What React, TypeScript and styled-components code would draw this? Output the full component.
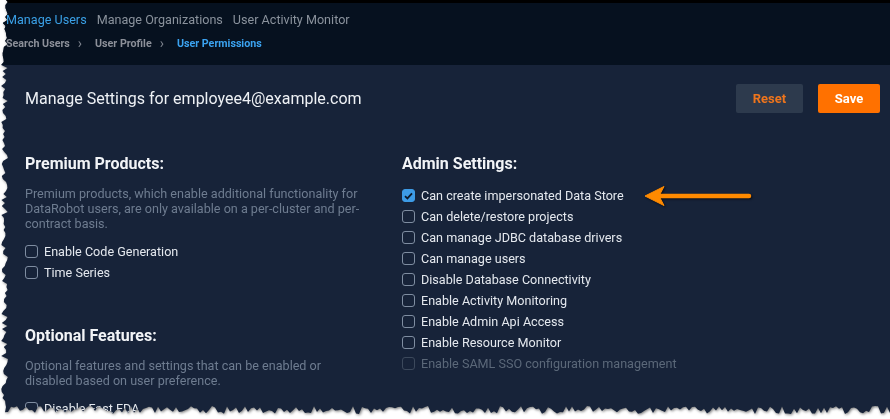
import React from "react";
import styled, { createGlobalStyle } from "styled-components";

const GlobalStyle = createGlobalStyle`
  html, body { margin: 0; padding: 0; background: #ffffff; }
  body { font-family: Roboto, "Liberation Sans", Arial, sans-serif; overflow: hidden; }
`;

function makeTornClip(): string {
  let s = 12345;
  const rnd = () => {
    s = (s * 16807) % 2147483647;
    return (s - 1) / 2147483646;
  };
  const pts: string[] = [];
  pts.push("6px 0px");
  pts.push("890px 0px");
  pts.push("890px 413px");
  for (let x = 887; x > 4; x -= 3) {
    const y = 406 + rnd() * 8;
    pts.push(`${x}px ${y.toFixed(1)}px`);
  }
  for (let y = 407; y > 0; y -= 3) {
    const x = 1 + rnd() * 7;
    pts.push(`${x.toFixed(1)}px ${y}px`);
  }
  return `polygon(${pts.join(", ")})`;
}

const TORN = makeTornClip();

const Shadow = styled.div`
  width: 890px;
  height: 419px;
  filter: drop-shadow(1px 1px 1.5px rgba(0, 0, 0, 0.55));
`;

const Frame = styled.div`
  position: relative;
  width: 890px;
  height: 419px;
  display: flex;
  flex-direction: column;
  background: #172339;
  clip-path: ${TORN};
  overflow: hidden;
`;

const TopStrip = styled.div`
  height: 3px;
  background: #000000;
  flex: none;
`;

const Header = styled.header`
  flex: none;
  background: #06111f;
  padding: 9px 6px 14px 6px;
  display: flex;
  flex-direction: column;
  gap: 9px;
`;

const Tabs = styled.nav`
  display: flex;
  gap: 10px;
  height: 16px;
  align-items: center;
`;

const Tab = styled.span<{ $active?: boolean }>`
  font-size: 12.6px;
  line-height: 16px;
  color: ${(p) => (p.$active ? "#3aa0e6" : "#8a929c")};
`;

const Crumbs = styled.div`
  display: flex;
  align-items: center;
  height: 14px;
`;

const Crumb = styled.span<{ $active?: boolean }>`
  font-size: 10.7px;
  line-height: 14px;
  font-weight: 700;
  color: ${(p) => (p.$active ? "#3ba3f0" : "#8c9099")};
`;

const Sep = styled.span`
  font-size: 14px;
  line-height: 14px;
  color: #7d838d;
  margin: -2px 13px 0 8px;
`;

const Panel = styled.main`
  flex: 1;
  padding: 19px 10px 0 25px;
  display: flex;
  flex-direction: column;
`;

const TitleRow = styled.div`
  display: flex;
  align-items: center;
  justify-content: space-between;
  height: 29px;
`;

const Title = styled.h1`
  margin: 0;
  font-size: 16px;
  font-weight: 400;
  color: #eef1f5;
`;

const Buttons = styled.div`
  display: flex;
  gap: 15px;
`;

const Button = styled.button<{ $primary?: boolean }>`
  height: 29px;
  width: ${(p) => (p.$primary ? "62px" : "67px")};
  border: none;
  border-radius: 2px;
  font-family: Roboto, "Liberation Sans", sans-serif;
  font-size: 13px;
  font-weight: 700;
  background: ${(p) => (p.$primary ? "#ff7100" : "#2d3a4d")};
  color: ${(p) => (p.$primary ? "#ffffff" : "#ef751c")};
`;

const Columns = styled.div`
  display: grid;
  grid-template-columns: 377px 1fr;
  margin-top: 41px;
`;

const Section = styled.section`
  display: flex;
  flex-direction: column;
`;

const Heading = styled.h2<{ $gap?: number }>`
  margin: ${(p) => p.$gap ?? 0}px 0 0 0;
  font-size: 16px;
  line-height: 20px;
  font-weight: 700;
  color: #f2f4f7;
`;

const Desc = styled.p`
  margin: 12px 0 0 0;
  width: 340px;
  font-size: 12.6px;
  line-height: 15px;
  color: #6e7c90;
`;

const List = styled.div<{ $gap: number }>`
  display: flex;
  flex-direction: column;
  margin-top: ${(p) => p.$gap}px;
`;

const Row = styled.label<{ $disabled?: boolean }>`
  display: flex;
  align-items: center;
  gap: 6px;
  height: 21px;
  font-size: 12.6px;
  color: ${(p) => (p.$disabled ? "#5b6879" : "#e4e8ee")};
`;

const Box = styled.span<{ $checked?: boolean; $disabled?: boolean }>`
  width: 13px;
  height: 13px;
  box-sizing: border-box;
  border-radius: 3px;
  flex: none;
  display: flex;
  align-items: center;
  justify-content: center;
  border: 1.5px solid
    ${(p) => (p.$checked ? "#3d9be6" : p.$disabled ? "#3c495c" : "#7f8da1")};
  background: ${(p) => (p.$checked ? "#3d9be6" : "transparent")};
`;

const Arrow = styled.svg`
  position: absolute;
  left: 638px;
  top: 181px;
  filter: drop-shadow(1px 1.5px 1px rgba(0, 0, 0, 0.6));
`;

type Item = { label: string; checked?: boolean; disabled?: boolean };

const Check = ({ label, checked, disabled }: Item) => (
  <Row $disabled={disabled}>
    <Box $checked={checked} $disabled={disabled}>
      {checked && (
        <svg width="9" height="8" viewBox="0 0 9 8">
          <path d="M1 4.2 L3.4 6.4 L8 1.4" stroke="#0d1a2c" strokeWidth="1.8" fill="none" />
        </svg>
      )}
    </Box>
    {label}
  </Row>
);

const admin: Item[] = [
  { label: "Can create impersonated Data Store", checked: true },
  { label: "Can delete/restore projects" },
  { label: "Can manage JDBC database drivers" },
  { label: "Can manage users" },
  { label: "Disable Database Connectivity" },
  { label: "Enable Activity Monitoring" },
  { label: "Enable Admin Api Access" },
  { label: "Enable Resource Monitor" },
  { label: "Enable SAML SSO configuration management", disabled: true },
];

export default function App() {
  return (
    <>
      <GlobalStyle />
      <Shadow>
        <Frame>
          <TopStrip />
          <Header>
            <Tabs>
              <Tab $active>Manage Users</Tab>
              <Tab>Manage Organizations</Tab>
              <Tab>User Activity Monitor</Tab>
            </Tabs>
            <Crumbs>
              <Crumb>Search Users</Crumb>
              <Sep>›</Sep>
              <Crumb>User Profile</Crumb>
              <Sep>›</Sep>
              <Crumb $active>User Permissions</Crumb>
            </Crumbs>
          </Header>
          <Panel>
            <TitleRow>
              <Title>Manage Settings for employee4@example.com</Title>
              <Buttons>
                <Button>Reset</Button>
                <Button $primary>Save</Button>
              </Buttons>
            </TitleRow>
            <Columns>
              <Section>
                <Heading>Premium Products:</Heading>
                <Desc>
                  Premium products, which enable additional functionality for DataRobot users, are only
                  available on a per-cluster and per-contract basis.
                </Desc>
                <List $gap={10}>
                  <Check label="Enable Code Generation" />
                  <Check label="Time Series" />
                </List>
                <Heading $gap={43}>Optional Features:</Heading>
                <Desc>
                  Optional features and settings that can be enabled or disabled based on user
                  preference.
                </Desc>
                <List $gap={10}>
                  <Check label="Disable Fast EDA" />
                </List>
              </Section>
              <Section>
                <Heading>Admin Settings:</Heading>
                <List $gap={11}>
                  {admin.map((it) => (
                    <Check key={it.label} {...it} />
                  ))}
                </List>
              </Section>
            </Columns>
          </Panel>
          <Arrow width="120" height="30" viewBox="0 0 120 30">
            <path d="M7 15 L26 5.5 L21 15 L26 24.5 Z" fill="#ff8a00" stroke="#ff8a00" strokeWidth="1" strokeLinejoin="round" />
            <line x1="20" y1="15" x2="111" y2="15" stroke="#ff8a00" strokeWidth="4.5" strokeLinecap="round" />
          </Arrow>
        </Frame>
      </Shadow>
    </>
  );
}
